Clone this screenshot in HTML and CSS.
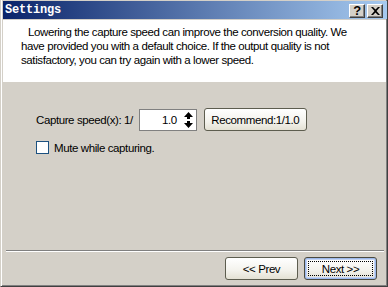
FILE: index.html
```html
<!DOCTYPE html>
<html lang="en">
<head>
    <meta charset="UTF-8">
    <title>Settings</title>
    <link rel="stylesheet" href="styles.css">
</head>
<body>
    <div class="window">
        <div class="titlebar">
            <span class="title">Settings</span>
            <div class="caption-buttons">
                <span class="cap-btn">?</span>
                <span class="cap-btn">
                    <svg width="9" height="8" viewBox="0 0 9 8">
                        <path d="M0 0h2l2.5 2.5L7 0h2L5.5 4 9 8H7L4.5 5.5 2 8H0l3.5-4z" fill="#000"/>
                    </svg>
                </span>
            </div>
        </div>

        <div class="intro">
            <p><span class="indent"></span>Lowering the capture speed can improve the conversion quality. We<br>have provided you with a default choice. If the output quality is not<br>satisfactory, you can try again with a lower speed.</p>
        </div>

        <div class="body">
            <div class="speed-row">
                <label class="speed-label">Capture speed(x): 1/</label>
                <div class="spin">
                    <span class="spin-value">1.0</span>
                    <svg class="spin-arrows" width="9" height="16" viewBox="0 0 9 16">
                        <!-- up and down arrows -->
                        <path d="M4.5 0L9 5H0z M3 5h3v2H3z" fill="#000"/>
                        <path d="M3 9h3v2H3z M0 11h9L4.5 16z" fill="#000"/>
                    </svg>
                </div>
                <button class="btn recommend">Recommend:1/1.0</button>
            </div>

            <label class="check-row">
                <span class="checkbox"></span>
                <span>Mute while capturing.</span>
            </label>
        </div>

        <div class="footer">
            <button class="btn nav">&lt;&lt; Prev</button>
            <button class="btn nav default"><span class="focus">Next &gt;&gt;</span></button>
        </div>
    </div>
</body>
</html>
```

FILE: styles.css
```css
body {
    margin: 0;
    font-family: 'Liberation Sans', Arial, sans-serif;
    font-size: 11.5px;
    letter-spacing: -0.4px;
    color: #000;
    background: #d4d0c8;
}
.window {
    width: 388px;
    height: 287px;
    box-sizing: border-box;
    display: flex;
    flex-direction: column;
    background: #d4d0c8;
    border-left: 1px solid #d4d0c8;
    border-right: 1px solid #404040;
    border-bottom: 1px solid #404040;
    padding: 0 1px 1px 2px;
    box-shadow: inset 1px 0 0 #fff, inset -1px 0 0 #808080, inset 0 -1px 0 #808080;
}
.titlebar {
    height: 18px;
    margin: 1px -1px 0 0;
    display: flex;
    align-items: center;
    justify-content: space-between;
    background: linear-gradient(to right, #0a246a, #a6caf0);
}
.title {
    font-family: 'Liberation Mono', monospace;
    font-weight: bold;
    font-size: 12px;
    color: #fff;
    padding-left: 2px;
    letter-spacing: -0.2px;
}
.caption-buttons {
    display: flex;
    gap: 2px;
    padding-right: 4px;
    padding-top: 1px;
}
.cap-btn {
    width: 16px;
    height: 14px;
    box-sizing: border-box;
    display: flex;
    align-items: center;
    justify-content: center;
    background: #d4d0c8;
    font-weight: bold;
    font-size: 13px;
    line-height: 1;
    border-top: 1px solid #fff;
    border-left: 1px solid #fff;
    border-right: 1px solid #404040;
    border-bottom: 1px solid #404040;
    box-shadow: inset -1px -1px 0 #808080;
}
.intro {
    background: #fff;
    height: 62px;
    margin-top: 1px;
    box-sizing: border-box;
    padding: 5px 10px 0 18px;
}
.intro p {
    margin: 0;
    line-height: 14px;
    white-space: nowrap;
}
.indent {
    display: inline-block;
    width: 7px;
}
.body {
    flex: 1;
    padding: 26px 0 0 33px;
}
.speed-row {
    display: flex;
    align-items: center;
}
.speed-label {
    margin-right: 6px;
}
.spin {
    width: 58px;
    height: 22px;
    box-sizing: border-box;
    border: 1px solid #808080;
    background: #fff;
    display: flex;
    align-items: center;
    justify-content: flex-end;
    padding-right: 3px;
}
.spin-value {
    margin-right: 7px;
}
.btn {
    font-family: 'Liberation Sans', Arial, sans-serif;
    font-size: 11.5px;
    letter-spacing: -0.4px;
    color: #000;
    height: 23px;
    border: 1px solid #5d5d4f;
    border-radius: 3px;
    background: linear-gradient(to bottom, #fff, #f3f2ec 60%, #e4e1d4);
    padding: 0;
}
.recommend {
    width: 103px;
    margin-left: 7px;
}
.check-row {
    display: flex;
    align-items: center;
    gap: 5px;
    margin-top: 10px;
}
.checkbox {
    width: 13px;
    height: 13px;
    box-sizing: border-box;
    border: 1px solid #1c5180;
    background: #fff;
}
.footer {
    border-top: 1px solid #808080;
    box-shadow: inset 0 1px 0 #fff;
    margin: 0 2px 5px 3px;
    display: flex;
    justify-content: flex-end;
    gap: 6px;
    padding: 6px 7px 0 0;
}
.nav {
    width: 73px;
    height: 23px;
}
.default {
    border-color: #4a4a40;
    box-shadow: inset 0 0 0 1px #9db9eb, inset 0 0 0 2px #c3d4f5;
    padding: 3px;
}
.focus {
    display: flex;
    align-items: center;
    justify-content: center;
    height: 100%;
    box-sizing: border-box;
    border: 1px dotted #000;
}
```
